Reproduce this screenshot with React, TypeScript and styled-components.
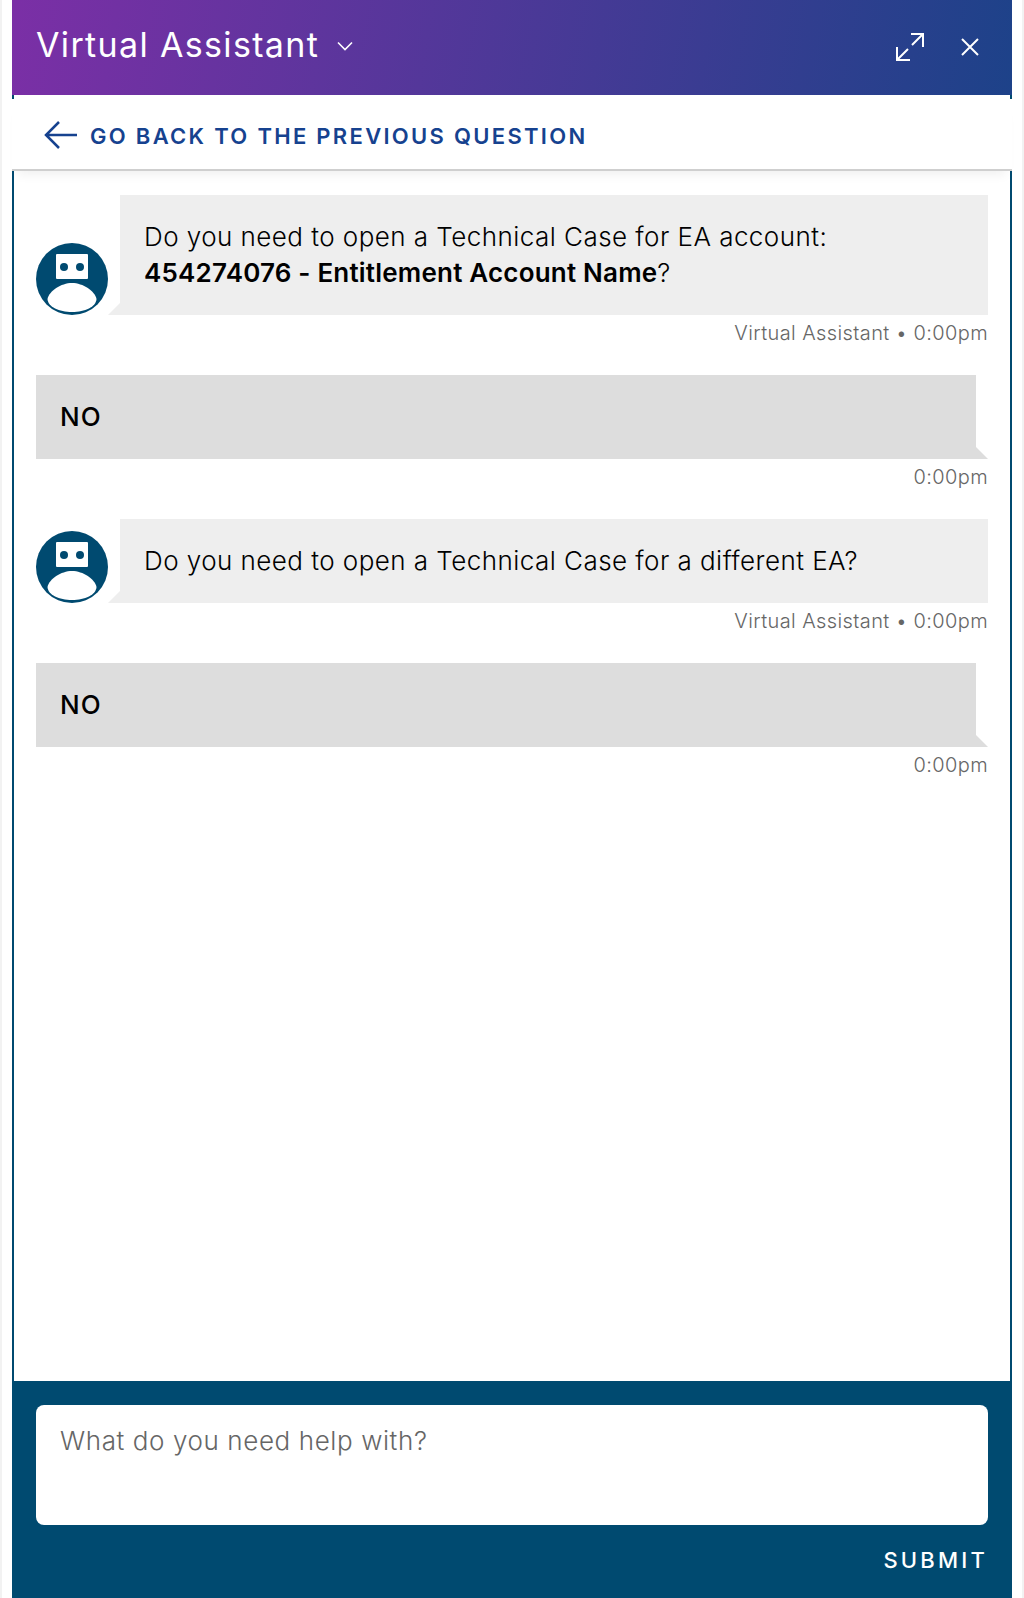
import styled, { createGlobalStyle } from "styled-components";

const GlobalStyle = createGlobalStyle`
  html, body {
    margin: 0;
    padding: 0;
    background: #fff;
  }
  body {
    font-family: Inter, "Liberation Sans", sans-serif;
  }
`;

const ACCENT = "#004a70";
const LINK = "#16428f";

function BotAvatar() {
  return (
    <AvatarSvg viewBox="0 0 72 72">
      <circle cx="36" cy="36" r="36" fill={ACCENT} />
      <rect x="20" y="11" width="32" height="25" rx="1" fill="#fff" />
      <circle cx="28" cy="24" r="4" fill={ACCENT} />
      <circle cx="44" cy="24" r="4" fill={ACCENT} />
      <path d="M11.5 56 C13 48 25 40 36 40 C47 40 59 48 60.5 56 C60 64 49 69 36 69 C23 69 12 64 11.5 56Z" fill="#fff" />
    </AvatarSvg>
  );
}

function BotMessage({ children }: { children: React.ReactNode }) {
  return (
    <MessageGroup>
      <BotRow>
        <BotAvatar />
        <BotBubble>{children}</BotBubble>
      </BotRow>
      <Stamp>Virtual Assistant • 0:00pm</Stamp>
    </MessageGroup>
  );
}

function UserMessage({ children }: { children: React.ReactNode }) {
  return (
    <MessageGroup>
      <UserBubble>{children}</UserBubble>
      <Stamp>0:00pm</Stamp>
    </MessageGroup>
  );
}

export default function App() {
  return (
    <>
      <GlobalStyle />
      <Page>
        <Panel>
          <Header>
            <TitleWrap>
              <Title>Virtual Assistant</Title>
              <svg width="18" height="12" viewBox="0 0 18 12" fill="none" stroke="#fff" strokeWidth="1.6">
                <path d="M2 2.5 L9 9.5 L16 2.5" />
              </svg>
            </TitleWrap>
            <HeaderIcons>
              <svg width="28" height="28" viewBox="0 0 28 28" fill="none" stroke="#fff" strokeWidth="2">
                <path d="M15 1 H27 V14 M27 1 L16 12 M1 14 V27 H14 M1 27 L12 16" />
              </svg>
              <svg width="18" height="18" viewBox="0 0 18 18" fill="none" stroke="#fff" strokeWidth="2">
                <path d="M1 1 L17 17 M17 1 L1 17" />
              </svg>
            </HeaderIcons>
          </Header>
          <Body>
            <BackBar>
              <svg width="34" height="28" viewBox="0 0 34 28" fill="none" stroke={LINK} strokeWidth="2.5">
                <path d="M33 14 H2 M15 1 L2 14 L15 27" />
              </svg>
              <BackLabel>GO BACK TO THE PREVIOUS QUESTION</BackLabel>
            </BackBar>
            <Messages>
              <BotMessage>
                Do you need to open a Technical Case for EA account:
                <br />
                <strong>454274076 - Entitlement Account Name</strong>?
              </BotMessage>
              <UserMessage>NO</UserMessage>
              <BotMessage>Do you need to open a Technical Case for a different EA?</BotMessage>
              <UserMessage>NO</UserMessage>
            </Messages>
          </Body>
          <Footer>
            <Input placeholder="What do you need help with?" />
            <Submit>SUBMIT</Submit>
          </Footer>
        </Panel>
      </Page>
    </>
  );
}

const Page = styled.div`
  width: 1024px;
  height: 1598px;
  padding: 0 12px;
  box-sizing: border-box;
  background: linear-gradient(to right, #f2f2f2 2px, #fff 2px, #fff 1022px, #f2f2f2 1022px);
`;

const Panel = styled.div`
  height: 100%;
  display: flex;
  flex-direction: column;
`;

const Header = styled.header`
  height: 95px;
  flex-shrink: 0;
  padding: 0 29px 4px 24px;
  box-sizing: border-box;
  display: flex;
  align-items: center;
  justify-content: space-between;
  background: linear-gradient(100deg, #7b2fa6 0%, #1d4289 100%);
`;

const TitleWrap = styled.div`
  display: flex;
  align-items: center;
  gap: 17px;
`;

const Title = styled.h1`
  margin: -2px 0 0;
  font-size: 34px;
  font-weight: 400;
  letter-spacing: 1.35px;
  color: #fff;
`;

const HeaderIcons = styled.div`
  display: flex;
  align-items: center;
  gap: 37px;
  margin-top: 3px;
  padding-right: 4px;
`;

const Body = styled.div`
  flex: 1;
  min-height: 0;
  padding-top: 4px;
  background: #fff;
  border-left: 2px solid ${ACCENT};
  border-right: 2px solid ${ACCENT};
  display: flex;
  flex-direction: column;
`;

const BackBar = styled.div`
  margin: 0 -2px;
  padding: 2px 0 0 32px;
  height: 68px;
  flex-shrink: 0;
  display: flex;
  align-items: center;
  gap: 12px;
  background: #fff;
  border-bottom: 2px solid #cfcfcf;
  box-shadow: 0 10px 10px -6px rgba(0, 0, 0, 0.06);
  position: relative;
`;

const BackLabel = styled.span`
  margin-top: 2px;
  font-size: 22px;
  font-weight: 600;
  letter-spacing: 2.3px;
  color: ${LINK};
`;

const Messages = styled.div`
  padding: 24px 22px 0;
  display: flex;
  flex-direction: column;
  gap: 30px;
`;

const MessageGroup = styled.div`
  display: flex;
  flex-direction: column;
`;

const BotRow = styled.div`
  display: flex;
  align-items: flex-end;
`;

const AvatarSvg = styled.svg`
  width: 72px;
  height: 72px;
  flex-shrink: 0;
`;

const BotBubble = styled.div`
  flex: 1;
  margin-left: 12px;
  padding: 24px;
  background: #eee;
  font-size: 26px;
  font-weight: 300;
  letter-spacing: 0.45px;
  line-height: 36px;
  color: #000;
  position: relative;

  strong {
    font-weight: 600;
    letter-spacing: 0.2px;
  }

  &::before {
    content: "";
    position: absolute;
    left: -12px;
    bottom: 0;
    border-style: solid;
    border-width: 0 0 12px 12px;
    border-color: transparent transparent #eee transparent;
  }
`;

const UserBubble = styled.div`
  margin-right: 12px;
  padding: 24px;
  background: #ddd;
  font-size: 26px;
  font-weight: 500;
  letter-spacing: 1px;
  line-height: 36px;
  color: #000;
  position: relative;

  &::after {
    content: "";
    position: absolute;
    right: -12px;
    bottom: 0;
    border-style: solid;
    border-width: 12px 0 0 12px;
    border-color: transparent transparent transparent #ddd;
  }
`;

const Stamp = styled.div`
  margin-top: 6px;
  text-align: right;
  font-size: 20px;
  font-weight: 300;
  letter-spacing: 0.4px;
  line-height: 24px;
  color: #666;
`;

const Footer = styled.footer`
  height: 217px;
  flex-shrink: 0;
  padding: 24px 24px 0;
  box-sizing: border-box;
  background: ${ACCENT};
  display: flex;
  flex-direction: column;
`;

const Input = styled.textarea`
  height: 120px;
  padding: 18px 24px;
  box-sizing: border-box;
  border: 0;
  border-radius: 8px;
  outline: 0;
  resize: none;
  background: #fff;
  font-family: inherit;
  font-size: 26px;
  font-weight: 300;
  letter-spacing: 0.6px;
  line-height: 36px;

  &::placeholder {
    color: #666;
    opacity: 1;
  }
`;

const Submit = styled.button`
  align-self: flex-end;
  margin-top: 22px;
  padding: 0;
  border: 0;
  background: none;
  color: #fff;
  font-family: inherit;
  font-size: 22px;
  font-weight: 500;
  letter-spacing: 3.2px;
  line-height: 26px;
`;
